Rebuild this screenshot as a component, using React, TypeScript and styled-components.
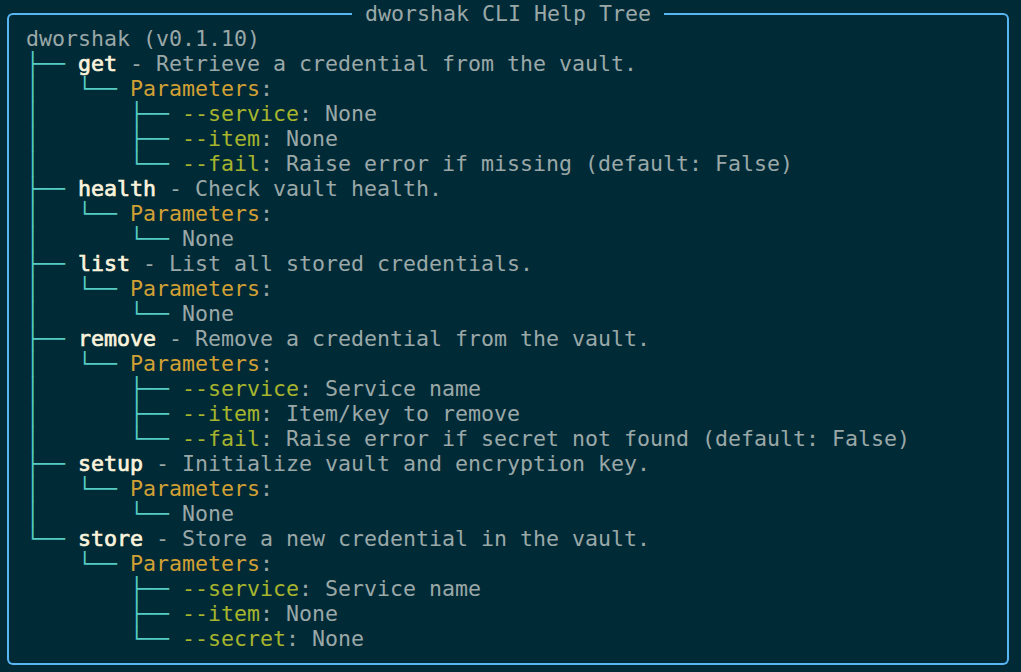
import React from "react";
import styled, { createGlobalStyle } from "styled-components";

const GlobalStyle = createGlobalStyle`
  html, body {
    margin: 0;
    padding: 0;
    background: #012a37;
  }
  body {
    font-family: "DejaVu Sans Mono", "Liberation Mono", monospace;
    font-size: 21.6px;
    line-height: 25px;
    color: #9aa8a8;
  }
`;

const Page = styled.div`
  width: 1021px;
  height: 672px;
  box-sizing: border-box;
  padding: 1px 12px 0 7px;
`;

const Panel = styled.section`
  width: 1002px;
  display: flex;
  flex-direction: column;
`;

const Header = styled.header`
  display: flex;
  height: 25px;
`;

const Cap = styled.div<{ $side: "left" | "right" }>`
  flex: 1;
  align-self: flex-end;
  height: 11px;
  border-top: 2px solid #58b6f2;
  ${(p) =>
    p.$side === "left"
      ? "border-left: 2px solid #58b6f2; border-top-left-radius: 6px;"
      : "border-right: 2px solid #58b6f2; border-top-right-radius: 6px;"}
`;

const Title = styled.h1`
  margin: 0;
  padding: 0 13px;
  font: inherit;
  color: #9aa8a8;
  white-space: pre;
  line-height: 25px;
`;

const Body = styled.div`
  border: 2px solid #58b6f2;
  border-top: none;
  border-radius: 0 0 6px 6px;
  padding: 0 0 12px 17px;
`;

const Line = styled.div`
  height: 25px;
  line-height: 25px;
  white-space: pre;
`;

const Guide = styled.span`
  color: #55cbc2;
`;

const Cmd = styled.span`
  color: #fbf4dd;
  font-weight: normal;
  -webkit-text-stroke: 0.7px #fbf4dd;
`;

const Section = styled.span`
  color: #d3a133;
`;

const Flag = styled.span`
  color: #a6b52c;
`;

const Plain = styled.span`
  color: #9aa8a8;
`;

type Param = { flag?: string; text: string };
type Command = { name: string; desc: string; params: Param[] };

const commands: Command[] = [
  {
    name: "get",
    desc: "Retrieve a credential from the vault.",
    params: [
      { flag: "--service", text: "None" },
      { flag: "--item", text: "None" },
      { flag: "--fail", text: "Raise error if missing (default: False)" },
    ],
  },
  { name: "health", desc: "Check vault health.", params: [{ text: "None" }] },
  { name: "list", desc: "List all stored credentials.", params: [{ text: "None" }] },
  {
    name: "remove",
    desc: "Remove a credential from the vault.",
    params: [
      { flag: "--service", text: "Service name" },
      { flag: "--item", text: "Item/key to remove" },
      { flag: "--fail", text: "Raise error if secret not found (default: False)" },
    ],
  },
  { name: "setup", desc: "Initialize vault and encryption key.", params: [{ text: "None" }] },
  {
    name: "store",
    desc: "Store a new credential in the vault.",
    params: [
      { flag: "--service", text: "Service name" },
      { flag: "--item", text: "None" },
      { flag: "--secret", text: "None" },
    ],
  },
];

export default function App() {
  const lines: React.ReactNode[] = [];
  lines.push(
    <Line key="root">
      <Plain>dworshak (v0.1.10)</Plain>
    </Line>
  );
  commands.forEach((c, ci) => {
    const lastCmd = ci === commands.length - 1;
    const trunk = lastCmd ? "    " : "│   ";
    lines.push(
      <Line key={c.name}>
        <Guide>{lastCmd ? "└── " : "├── "}</Guide>
        <Cmd>{c.name}</Cmd>
        <Plain>{" - " + c.desc}</Plain>
      </Line>
    );
    lines.push(
      <Line key={c.name + "-params"}>
        <Guide>{trunk + "└── "}</Guide>
        <Section>Parameters</Section>
        <Plain>:</Plain>
      </Line>
    );
    c.params.forEach((p, pi) => {
      const lastP = pi === c.params.length - 1;
      lines.push(
        <Line key={c.name + "-p" + pi}>
          <Guide>{trunk + "    " + (lastP ? "└── " : "├── ")}</Guide>
          {p.flag ? (
            <>
              <Flag>{p.flag}</Flag>
              <Plain>{": " + p.text}</Plain>
            </>
          ) : (
            <Plain>{p.text}</Plain>
          )}
        </Line>
      );
    });
  });

  return (
    <>
      <GlobalStyle />
      <Page>
        <Panel>
          <Header>
            <Cap $side="left" />
            <Title>dworshak CLI Help Tree</Title>
            <Cap $side="right" />
          </Header>
          <Body>{lines}</Body>
        </Panel>
      </Page>
    </>
  );
}
